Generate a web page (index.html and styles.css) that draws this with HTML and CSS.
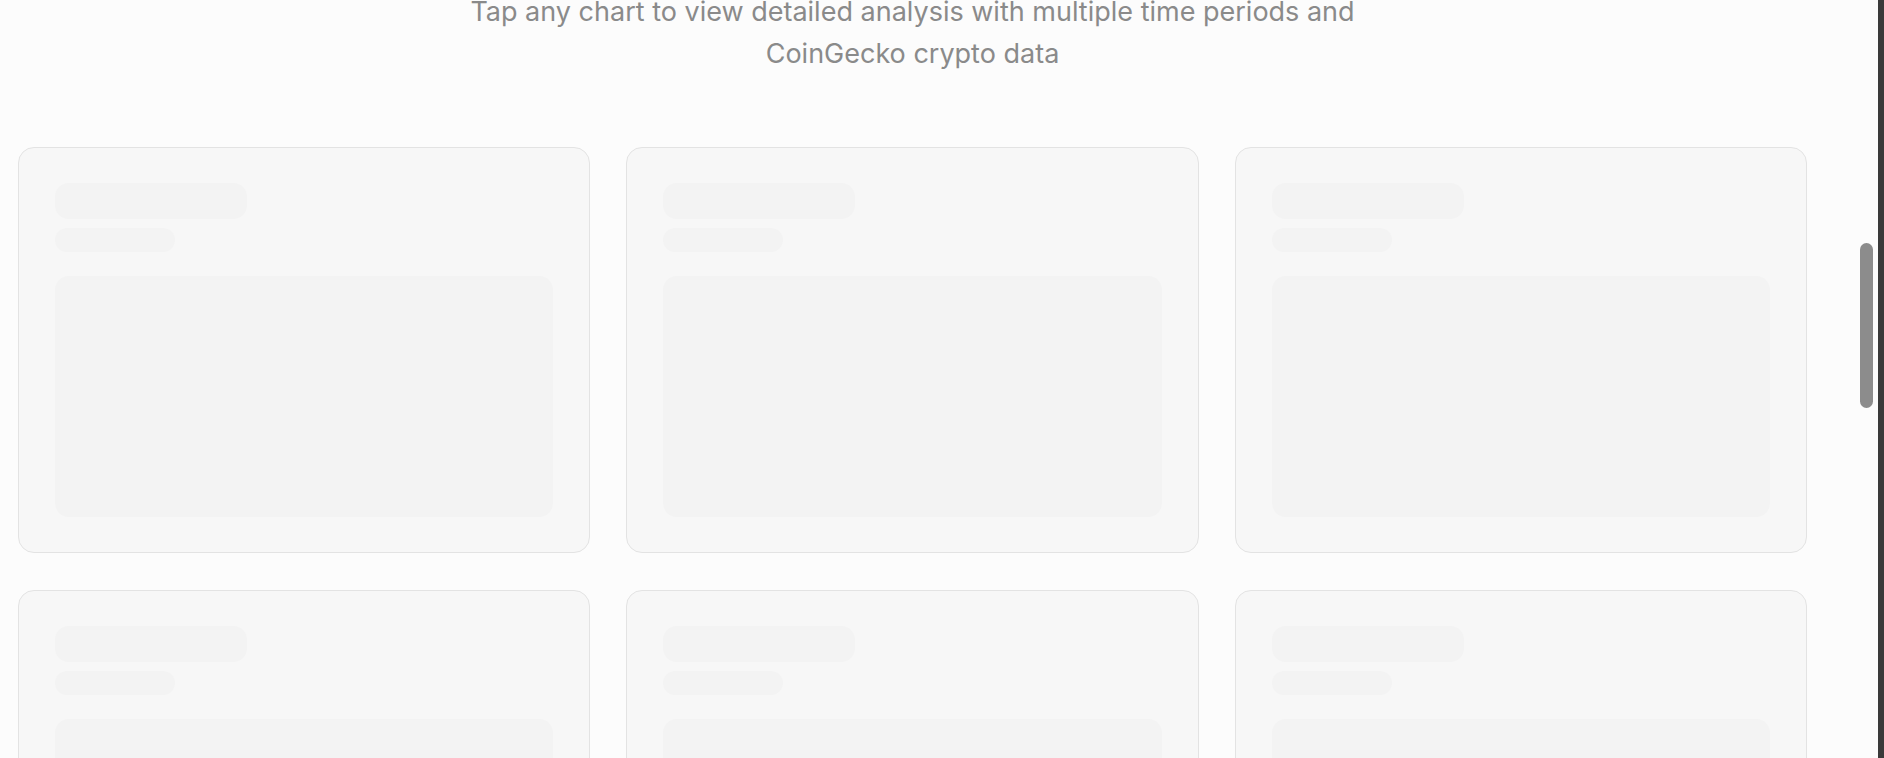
FILE: index.html
```html
<!DOCTYPE html>
<html lang="en">
<head>
<meta charset="utf-8">
<title>Charts</title>
<link rel="stylesheet" href="styles.css">
</head>
<body>
<div class="app">
  <main class="page">
    <section class="intro">
      <p>Tap any chart to view detailed analysis with multiple time periods and CoinGecko crypto data</p>
    </section>
    <section class="grid">
      <div class="card"><div class="sk-title"></div><div class="sk-sub"></div><div class="sk-chart"></div></div>
      <div class="card"><div class="sk-title"></div><div class="sk-sub"></div><div class="sk-chart"></div></div>
      <div class="card"><div class="sk-title"></div><div class="sk-sub"></div><div class="sk-chart"></div></div>
      <div class="card"><div class="sk-title"></div><div class="sk-sub"></div><div class="sk-chart"></div></div>
      <div class="card"><div class="sk-title"></div><div class="sk-sub"></div><div class="sk-chart"></div></div>
      <div class="card"><div class="sk-title"></div><div class="sk-sub"></div><div class="sk-chart"></div></div>
    </section>
  </main>
  <div class="edge"></div>
</div>
<div class="scroll-thumb"></div>
</body>
</html>
```
FILE: styles.css
```css
* { box-sizing: border-box; }
html, body {
  margin: 0;
  height: 100%;
  overflow: hidden;
}
body {
  background: #fcfcfc;
  font-family: Inter, "Noto Sans", "Liberation Sans", sans-serif;
}
.app {
  display: flex;
  height: 100vh;
}
.page {
  flex: 1;
  padding-left: 18px;
  overflow: hidden;
}
.edge {
  width: 6px;
  flex: none;
  background: #3a3a3a;
}
.intro {
  width: 1789px;
  margin: -9px 0 72px;
  text-align: center;
}
.intro p {
  max-width: 960px;
  margin: 0 auto;
  font-size: 27px;
  line-height: 42px;
  color: #8a8a8a;
}
.grid {
  width: 1789px;
  display: grid;
  grid-template-columns: repeat(3, 1fr);
  column-gap: 36px;
  row-gap: 37px;
}
.card {
  height: 406px;
  background: #f7f7f7;
  border: 1px solid #e3e3e3;
  border-radius: 16px;
  padding: 35px 36px;
}
.sk-title {
  width: 192px;
  height: 36px;
  border-radius: 14px;
  background: #f3f3f3;
  margin-bottom: 9px;
}
.sk-sub {
  width: 120px;
  height: 24px;
  border-radius: 12px;
  background: #f3f3f3;
  margin-bottom: 24px;
}
.sk-chart {
  height: 241px;
  border-radius: 14px;
  background: #f3f3f3;
}
.scroll-thumb {
  position: fixed;
  top: 243px;
  right: 11px;
  width: 13px;
  height: 165px;
  border-radius: 7px;
  background: #8c8c8c;
}
```
